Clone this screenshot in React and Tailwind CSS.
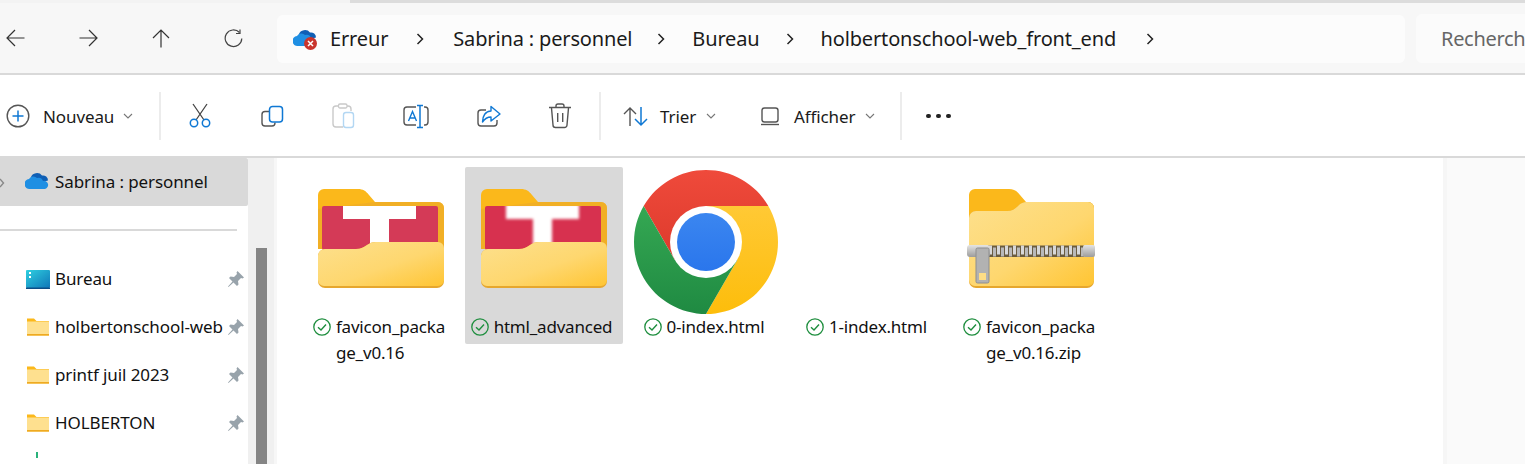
const FONT = "font-['Noto_Sans',sans-serif]";

const ITEMS = [
  { id: 'a', icon: 'thumb', lines: ['favicon_packa', 'ge_v0.16'] },
  { id: 'b', icon: 'thumbBlur', lines: ['html_advanced'], selected: true },
  { id: 'c', icon: 'chrome', lines: ['0-index.html'] },
  { id: 'd', icon: 'none', lines: ['1-index.html'] },
  { id: 'e', icon: 'zip', lines: ['favicon_packa', 'ge_v0.16.zip'] },
];

const QUICK = [
  { name: 'Bureau', icon: 'desktop' },
  { name: 'holbertonschool-web', icon: 'folder' },
  { name: 'printf juil 2023', icon: 'folder' },
  { name: 'HOLBERTON', icon: 'folder' },
];

function Chevron() {
  return (
    <svg width="8" height="14" viewBox="0 0 8 14" className="shrink-0">
      <path d="M1.5 2 L6.5 7 L1.5 12" fill="none" stroke="#222" strokeWidth="1.5" />
    </svg>
  );
}

function SmallDown() {
  return (
    <svg width="10" height="6" viewBox="0 0 10 6" className="shrink-0">
      <path d="M1 1 L5 5 L9 1" fill="none" stroke="#777" strokeWidth="1.1" />
    </svg>
  );
}

function Separator() {
  return <div className="w-[2px] h-[48px] bg-[#ececec] shrink-0" />;
}

function Cloud({ error }) {
  return (
    <svg width="26" height="24" viewBox="0 0 26 24" className="shrink-0">
      <path d="M6 7 a6 5 0 0 1 11-1.5 a5 5 0 0 1 6 5 L10 14 Z" fill="#0f5fb5" />
      <path d="M5 19 a5 5 0 0 1-1-10 a5 5 0 0 1 8-1 a5 5 0 0 1 6 3 a4 4 0 0 1 2 8 Z" fill="#1f8fe3" />
      {error && (
        <g>
          <circle cx="17.5" cy="16.5" r="6.5" fill="#c9352d" />
          <path d="M15 14 L20 19 M20 14 L15 19" stroke="#fff" strokeWidth="1.5" />
        </g>
      )}
    </svg>
  );
}

function Pin() {
  return (
    <svg width="18" height="18" viewBox="0 0 18 18" className="shrink-0">
      <path d="M10.5 1 L17 7.5 L15.5 8.5 L14 8 L11 11 L11.5 14.5 L10 16 L6.5 12.5 L1.5 17 L1 16.5 L5.5 11.5 L2 8 L3.5 6.5 L7 7 L10 4 L9.5 2.5 Z" fill="#98a3ab" />
    </svg>
  );
}

function SmallFolder() {
  return (
    <svg width="24" height="18" viewBox="0 0 24 18" className="shrink-0">
      <path d="M1 0.5 h7 l2.5 2.5 H23 V17.5 H1 Z" fill="#fbb81b" />
      <path d="M1 3.5 h22 V16 H1 Z" fill="#fee08f" />
      <rect x="1" y="16" width="22" height="1.5" fill="#eeaa22" />
    </svg>
  );
}

function DesktopIcon() {
  return (
    <svg width="24" height="19" viewBox="0 0 24 19" className="shrink-0">
      <defs>
        <linearGradient id="desk" x1="0" y1="0" x2="1" y2="1">
          <stop offset="0" stopColor="#2fd0e0" />
          <stop offset="1" stopColor="#0f76b8" />
        </linearGradient>
      </defs>
      <rect x="0" y="0" width="24" height="18" rx="1" fill="url(#desk)" />
      <rect x="0" y="17.5" width="24" height="1.5" fill="#0c4d86" />
      <rect x="3" y="2" width="2" height="2" fill="#fff" />
      <rect x="3" y="6" width="2" height="2" fill="#fff" />
    </svg>
  );
}

function CheckStatus() {
  return (
    <svg width="18" height="18" viewBox="0 0 18 18" className="shrink-0 mt-[4px]">
      <circle cx="9" cy="9" r="8.2" fill="none" stroke="#1e8e3e" strokeWidth="1.3" />
      <path d="M5 9.3 L8 12 L13 6.6" fill="none" stroke="#1e8e3e" strokeWidth="1.4" />
    </svg>
  );
}

function ThumbFolder({ blur, uid }) {
  const red = blur ? '#d7314f' : '#d43a57';
  return (
    <svg width="126" height="100" viewBox="0 0 126 100" className="mb-[6px]">
      <defs>
        <linearGradient id={`front-${uid}`} x1="0" y1="0" x2="1" y2="1">
          <stop offset="0" stopColor="#fde08d" />
          <stop offset="0.55" stopColor="#fed76f" />
          <stop offset="1" stopColor="#ffc533" />
        </linearGradient>
        <filter id={`soft-${uid}`} x="-10%" y="-10%" width="120%" height="120%">
          <feGaussianBlur stdDeviation="1.7" />
        </filter>
        <clipPath id={`clip-${uid}`}>
          <rect x="4" y="17" width="116" height="44" rx="2" />
        </clipPath>
      </defs>
      <path d="M6 0 H40 C45 0 48 2 51 6 L57 13 H120 a6 6 0 0 1 6 6 V60 H0 V6 a6 6 0 0 1 6-6 Z" fill="#fbb81b" />
      <path d="M57 13 H120 a6 6 0 0 1 6 6 V60 H0 V20 Z" fill="#edac29" opacity="0.75" />
      <rect x="4" y="17" width="116" height="44" rx="2" fill={red} />
      <g clipPath={`url(#clip-${uid})`}>
        <g filter={blur ? `url(#soft-${uid})` : undefined}>
          <path d="M25 15 H98 V30 H71 V62 H52 V30 H25 Z" fill="#fff" />
        </g>
      </g>
      <path d="M0 67 a7 7 0 0 1 7-7 H38 C43 60 46 58 49 56 C52 54 54 53 58 53 H120 a6 6 0 0 1 6 6 V92 a7 7 0 0 1-7 7 H7 a7 7 0 0 1-7-7 Z" fill="#e6a72e" />
      <path d="M0 67 a7 7 0 0 1 7-7 H38 C43 60 46 58 49 56 C52 54 54 53 58 53 H120 a6 6 0 0 1 6 6 V91 a6 6 0 0 1-6 6 H6 a6 6 0 0 1-6-6 Z" fill={`url(#front-${uid})`} />
    </svg>
  );
}

function ZipFolder() {
  const teeth = Array.from({ length: 24 }, (_, i) => 22 + i * 4);
  return (
    <svg width="128" height="100" viewBox="0 0 128 100" className="mb-[6px]">
      <defs>
        <linearGradient id="zip-front" x1="0" y1="0" x2="1" y2="1">
          <stop offset="0" stopColor="#fde08d" />
          <stop offset="0.55" stopColor="#fed76f" />
          <stop offset="1" stopColor="#ffc533" />
        </linearGradient>
        <linearGradient id="zip-metal" x1="0" y1="0" x2="0" y2="1">
          <stop offset="0" stopColor="#e4e4e4" />
          <stop offset="1" stopColor="#9c9c9c" />
        </linearGradient>
      </defs>
      <path d="M8 0 H42 C47 0 50 2 53 6 L59 13 H121 a6 6 0 0 1 6 6 V40 H2 V6 a6 6 0 0 1 6-6 Z" fill="#fbb81b" />
      <path d="M2 29 a7 7 0 0 1 7-7 H40 C45 22 48 20 51 17 C54 14 56 13 60 13 H121 a6 6 0 0 1 6 6 V92 a7 7 0 0 1-7 7 H9 a7 7 0 0 1-7-7 Z" fill="#e6a72e" />
      <path d="M2 29 a7 7 0 0 1 7-7 H40 C45 22 48 20 51 17 C54 14 56 13 60 13 H121 a6 6 0 0 1 6 6 V91 a6 6 0 0 1-6 6 H8 a6 6 0 0 1-6-6 Z" fill="url(#zip-front)" />
      <rect x="21" y="56.5" width="96" height="11.5" fill="#6a5c40" />
      {teeth.map((x, i) => (
        <rect key={x} x={x} y={i % 2 === 0 ? 56.5 : 58.5} width="3" height="9" fill={i % 2 === 0 ? '#d8d8d8' : '#b9b9b9'} />
      ))}
      <rect x="116" y="56" width="12" height="12" rx="2" fill="url(#zip-metal)" />
      <rect x="0" y="56" width="23" height="12" rx="3" fill="url(#zip-metal)" />
      <rect x="9" y="59" width="13" height="35" rx="1.5" fill="#b2b2b2" stroke="#8e8e8e" strokeWidth="1" />
      <rect x="12" y="84" width="7" height="7" fill="#fedd85" />
    </svg>
  );
}

function ChromeIcon() {
  return (
    <svg width="144" height="144" viewBox="0 0 144 144">
      <defs>
        <linearGradient id="ch-red" x1="0" y1="0" x2="0" y2="1">
          <stop offset="0" stopColor="#ef4a3b" />
          <stop offset="1" stopColor="#dd3a2c" />
        </linearGradient>
        <linearGradient id="ch-yellow" x1="0" y1="0" x2="0" y2="1">
          <stop offset="0" stopColor="#ffc935" />
          <stop offset="1" stopColor="#fdbd0b" />
        </linearGradient>
        <linearGradient id="ch-green" x1="0" y1="0" x2="0" y2="1">
          <stop offset="0" stopColor="#35a853" />
          <stop offset="1" stopColor="#1f8a42" />
        </linearGradient>
        <linearGradient id="ch-blue" x1="0" y1="0" x2="0" y2="1">
          <stop offset="0" stopColor="#3b86f0" />
          <stop offset="1" stopColor="#2a76ec" />
        </linearGradient>
      </defs>
      <path d="M9.65 36 A72 72 0 0 1 134.35 36 L72 36 L40.8 90 Z" fill="url(#ch-red)" />
      <path d="M134.35 36 A72 72 0 0 1 72 144 L103.2 90 L72 36 Z" fill="url(#ch-yellow)" />
      <path d="M72 144 A72 72 0 0 1 9.65 36 L40.8 90 L103.2 90 Z" fill="url(#ch-green)" />
      <circle cx="72" cy="72" r="36" fill="#fff" />
      <circle cx="72" cy="72" r="29" fill="url(#ch-blue)" />
    </svg>
  );
}

function ItemIcon({ kind, uid }) {
  if (kind === 'thumb') return <ThumbFolder uid={uid} />;
  if (kind === 'thumbBlur') return <ThumbFolder blur uid={uid} />;
  if (kind === 'chrome') return <ChromeIcon />;
  if (kind === 'zip') return <ZipFolder />;
  return null;
}

function FileItem({ item }) {
  return (
    <div className={`w-[158px] shrink-0 pt-[3px] pb-[4px] rounded-[2px] ${item.selected ? 'bg-[#d9d9d9]' : ''}`}>
      <div className="h-[144px] flex items-center justify-center">
        <ItemIcon kind={item.icon} uid={item.id} />
      </div>
      <div className="flex justify-center gap-[5px] pr-[4px]">
        <CheckStatus />
        <div className="text-[17px] leading-[26px] text-[#111] tracking-[-0.2px]">
          {item.lines.map((line) => (
            <div key={line} className="whitespace-nowrap">{line}</div>
          ))}
        </div>
      </div>
    </div>
  );
}

function Toolbar() {
  return (
    <div className="h-[81px] bg-white flex items-center shrink-0 pt-[1px] text-[17px] text-[#1a1a1a] tracking-[-0.1px]">
      <div className="w-[159px] flex items-center pl-[6px] shrink-0">
        <svg width="24" height="24" viewBox="0 0 24 24">
          <circle cx="12" cy="12" r="10.8" fill="none" stroke="#555" strokeWidth="1.4" />
          <path d="M12 6.5 V17.5 M6.5 12 H17.5" stroke="#0f78d4" strokeWidth="1.5" />
        </svg>
        <span className="ml-[13px] mt-[1px]">Nouveau</span>
        <span className="ml-[9px] flex"><SmallDown /></span>
      </div>
      <Separator />
      <div className="flex items-center ml-[3px]">
        <div className="w-[72px] flex justify-center">
          <svg width="28" height="28" viewBox="0 0 28 28" fill="none">
            <path d="M7 2 L18 18 M21 2 L10 18" stroke="#444" strokeWidth="1.3" />
            <circle cx="8" cy="21" r="3.7" stroke="#0f78d4" strokeWidth="1.5" />
            <circle cx="20" cy="21" r="3.7" stroke="#0f78d4" strokeWidth="1.5" />
          </svg>
        </div>
        <div className="w-[72px] flex justify-center">
          <svg width="28" height="28" viewBox="0 0 28 28" fill="none">
            <path d="M11 9.5 H7 a3 3 0 0 0-3 3 V21 a3 3 0 0 0 3 3 h7 a3 3 0 0 0 3-3 v-0.5" stroke="#555" strokeWidth="1.4" />
            <rect x="11.5" y="4.5" width="13" height="15.5" rx="3" stroke="#0f78d4" strokeWidth="1.5" />
          </svg>
        </div>
        <div className="w-[72px] flex justify-center">
          <svg width="28" height="28" viewBox="0 0 28 28" fill="none">
            <path d="M8 4 H6 a3 3 0 0 0-3 3 V22 a3 3 0 0 0 3 3 H13 M17 4 H18 a3 3 0 0 1 3 3 V9" stroke="#c9c9c9" strokeWidth="1.4" />
            <rect x="8.5" y="2" width="8.5" height="4" rx="1.5" stroke="#c9c9c9" strokeWidth="1.3" />
            <rect x="13.5" y="10.5" width="10" height="15" rx="2.5" stroke="#b3d7f3" strokeWidth="1.4" />
          </svg>
        </div>
        <div className="w-[72px] flex justify-center">
          <svg width="28" height="28" viewBox="0 0 28 28" fill="none">
            <path d="M14 5 H5 a3 3 0 0 0-3 3 V20 a3 3 0 0 0 3 3 H14 M22 5 H23 a3 3 0 0 1 3 3 V20 a3 3 0 0 1-3 3 H22" stroke="#555" strokeWidth="1.4" />
            <path d="M18 4 V25 M15 3.5 H21 M15 25.5 H21" stroke="#0f78d4" strokeWidth="1.5" />
            <path d="M6.5 19 L10.5 9.5 L14.5 19 M8 16 H13" stroke="#0f78d4" strokeWidth="1.4" />
          </svg>
        </div>
        <div className="w-[72px] flex justify-center">
          <svg width="28" height="28" viewBox="0 0 28 28" fill="none">
            <path d="M12 8 H7 a3 3 0 0 0-3 3 V21 a3 3 0 0 0 3 3 h13 a3 3 0 0 0 3-3 v-3" stroke="#555" strokeWidth="1.4" />
            <path d="M17 4.5 L26 12 L17 19 V15 C13 15 10.5 17 8.5 20 C8.5 14 11.5 9 17 9 Z" stroke="#0f78d4" strokeWidth="1.4" strokeLinejoin="round" />
          </svg>
        </div>
        <div className="w-[72px] flex justify-center">
          <svg width="28" height="28" viewBox="0 0 28 28" fill="none">
            <path d="M3 5.5 H25 M10 5 V4 a2 2 0 0 1 2-2 h4 a2 2 0 0 1 2 2 V5 M5.5 6 L7 23 a2.5 2.5 0 0 0 2.5 2.5 h9 A2.5 2.5 0 0 0 21 23 L22.5 6 M11.7 11 V20 M16.7 11 V20" stroke="#555" strokeWidth="1.4" />
          </svg>
        </div>
      </div>
      <div className="ml-[3px]"><Separator /></div>
      <div className="w-[149px] flex items-center pl-[21px] shrink-0">
        <svg width="28" height="28" viewBox="0 0 28 28" fill="none" className="shrink-0">
          <path d="M8 24 V6 M2 12 L8 6 L14 12" stroke="#555" strokeWidth="1.4" />
          <path d="M19 5 V23 M13 17 L19 23 L25 17" stroke="#0f78d4" strokeWidth="1.5" />
        </svg>
        <span className="ml-[10px] mt-[1px]">Trier</span>
        <span className="ml-[10px] flex"><SmallDown /></span>
      </div>
      <div className="w-[150px] flex items-center pl-[6px] shrink-0">
        <svg width="28" height="28" viewBox="0 0 28 28" fill="none" className="shrink-0">
          <rect x="6" y="6" width="16" height="14" rx="2.5" stroke="#555" strokeWidth="1.4" />
          <path d="M5 22.5 H23" stroke="#555" strokeWidth="1.4" />
        </svg>
        <span className="ml-[10px] mt-[1px]">Afficher</span>
        <span className="ml-[10px] flex"><SmallDown /></span>
      </div>
      <Separator />
      <div className="flex items-center gap-[5.4px] ml-[24px]">
        <span className="w-[4.6px] h-[4.6px] rounded-full bg-[#222]" />
        <span className="w-[4.6px] h-[4.6px] rounded-full bg-[#222]" />
        <span className="w-[4.6px] h-[4.6px] rounded-full bg-[#222]" />
      </div>
    </div>
  );
}

function Sidebar() {
  return (
    <aside className="w-[248px] shrink-0 bg-white text-[17px] text-[#111] tracking-[-0.1px]">
      <div className="h-[48px] bg-[#d9d9d9] rounded-r-[2px] flex items-center relative pl-[25px]">
        <svg width="5" height="10" viewBox="0 0 5 10" className="absolute left-0 top-[20px]">
          <path d="M0 1 L3.5 5 L0 9" fill="none" stroke="#888" strokeWidth="1.4" />
        </svg>
        <Cloud />
        <span className="ml-[4px] whitespace-nowrap">Sabrina : personnel</span>
      </div>
      <div className="w-[237px] h-[2px] bg-[#d9d9d9] mt-[23px] mb-[24px]" />
      {QUICK.map((row) => (
        <div key={row.name} className="h-[48px] flex items-center pl-[26px] pr-[3px]">
          {row.icon === 'desktop' ? <DesktopIcon /> : <SmallFolder />}
          <span className="ml-[5px] flex-1 whitespace-nowrap overflow-hidden">{row.name}</span>
          <Pin />
        </div>
      ))}
      <div className="h-[48px] flex pl-[36px] items-start pt-[5px]">
        <div className="w-[2px] h-[6px] bg-[#2ab27b]" />
      </div>
    </aside>
  );
}

export default function App() {
  return (
    <div className={`h-[464px] w-[1525px] overflow-hidden flex flex-col bg-white ${FONT}`}>
      {/* top strip of the window */}
      <div className="h-[3px] shrink-0 flex">
        <div className="w-[350px] bg-[#f3f3f3]" />
        <div className="flex-1 bg-[#dcdcdc]" />
      </div>

      {/* navigation + address */}
      <div className="h-[70px] shrink-0 bg-[#f7f7f7] flex items-center">
        <div className="w-[277px] shrink-0 flex items-center gap-[54px] pl-[6px]">
          <svg width="19" height="18" viewBox="0 0 19 18" fill="none">
            <path d="M18.5 9 H1 M9 1 L1 9 L9 17" stroke="#333" strokeWidth="1.2" />
          </svg>
          <svg width="19" height="18" viewBox="0 0 19 18" fill="none">
            <path d="M0.5 9 H18 M10 1 L18 9 L10 17" stroke="#333" strokeWidth="1.2" />
          </svg>
          <svg width="18" height="19" viewBox="0 0 18 19" fill="none">
            <path d="M9 18.5 V1 M1 9 L9 1 L17 9" stroke="#333" strokeWidth="1.2" />
          </svg>
          <svg width="19" height="19" viewBox="0 0 19 19" fill="none">
            <path d="M15.5 3.5 A8.3 8.3 0 1 0 17.8 9.5" stroke="#444" strokeWidth="1.2" />
            <path d="M16 0.5 V4.5 H12" stroke="#444" strokeWidth="1.2" />
          </svg>
        </div>
        <div className="w-[1128px] h-[48px] mt-[2px] mr-[11px] shrink-0 rounded-[6px] bg-[#fcfcfc] flex items-center pl-[16px] text-[20px] text-[#1a1a1a] tracking-[-0.15px]">
          <Cloud error />
          <span className="ml-[11px]">Erreur</span>
          <span className="ml-[28px] mr-[29px] flex"><Chevron /></span>
          <span className="whitespace-nowrap">Sabrina : personnel</span>
          <span className="ml-[25px] mr-[27px] flex"><Chevron /></span>
          <span>Bureau</span>
          <span className="ml-[26px] mr-[27px] flex"><Chevron /></span>
          <span className="whitespace-nowrap">holbertonschool-web_front_end</span>
          <span className="ml-[30px] flex"><Chevron /></span>
        </div>
        <div className="flex-1 h-[49px] mt-[1px] rounded-l-[6px] bg-[#fbfbfb] flex items-center pl-[25px] text-[20px] text-[#666] tracking-[-0.3px] overflow-hidden">
          <span className="whitespace-nowrap">Recherch</span>
        </div>
      </div>
      <div className="h-[2px] shrink-0 bg-[#d9d9d9]" />

      <Toolbar />
      <div className="h-[2px] shrink-0 bg-[#d9d9d9]" />

      {/* body */}
      <div className="flex-1 flex min-h-0">
        <Sidebar />

        {/* scrollbar */}
        <div className="w-[26px] shrink-0 bg-[#f0f0f0] pl-[8px] pt-[90px]">
          <div className="w-[11px] h-full bg-[#858585]" />
        </div>
        <div className="w-[3px] shrink-0 bg-[#f7f7f7]" />

        {/* files */}
        <main className="flex-1 bg-white flex items-start gap-[4.5px] pl-[25px] pt-[9px]">
          {ITEMS.map((item) => (
            <FileItem key={item.id} item={item} />
          ))}
        </main>

        <div className="w-[4px] shrink-0 bg-[#f6f6f6]" />
        <div className="w-[78px] shrink-0 bg-[#fafafa]" />
      </div>
    </div>
  );
}
